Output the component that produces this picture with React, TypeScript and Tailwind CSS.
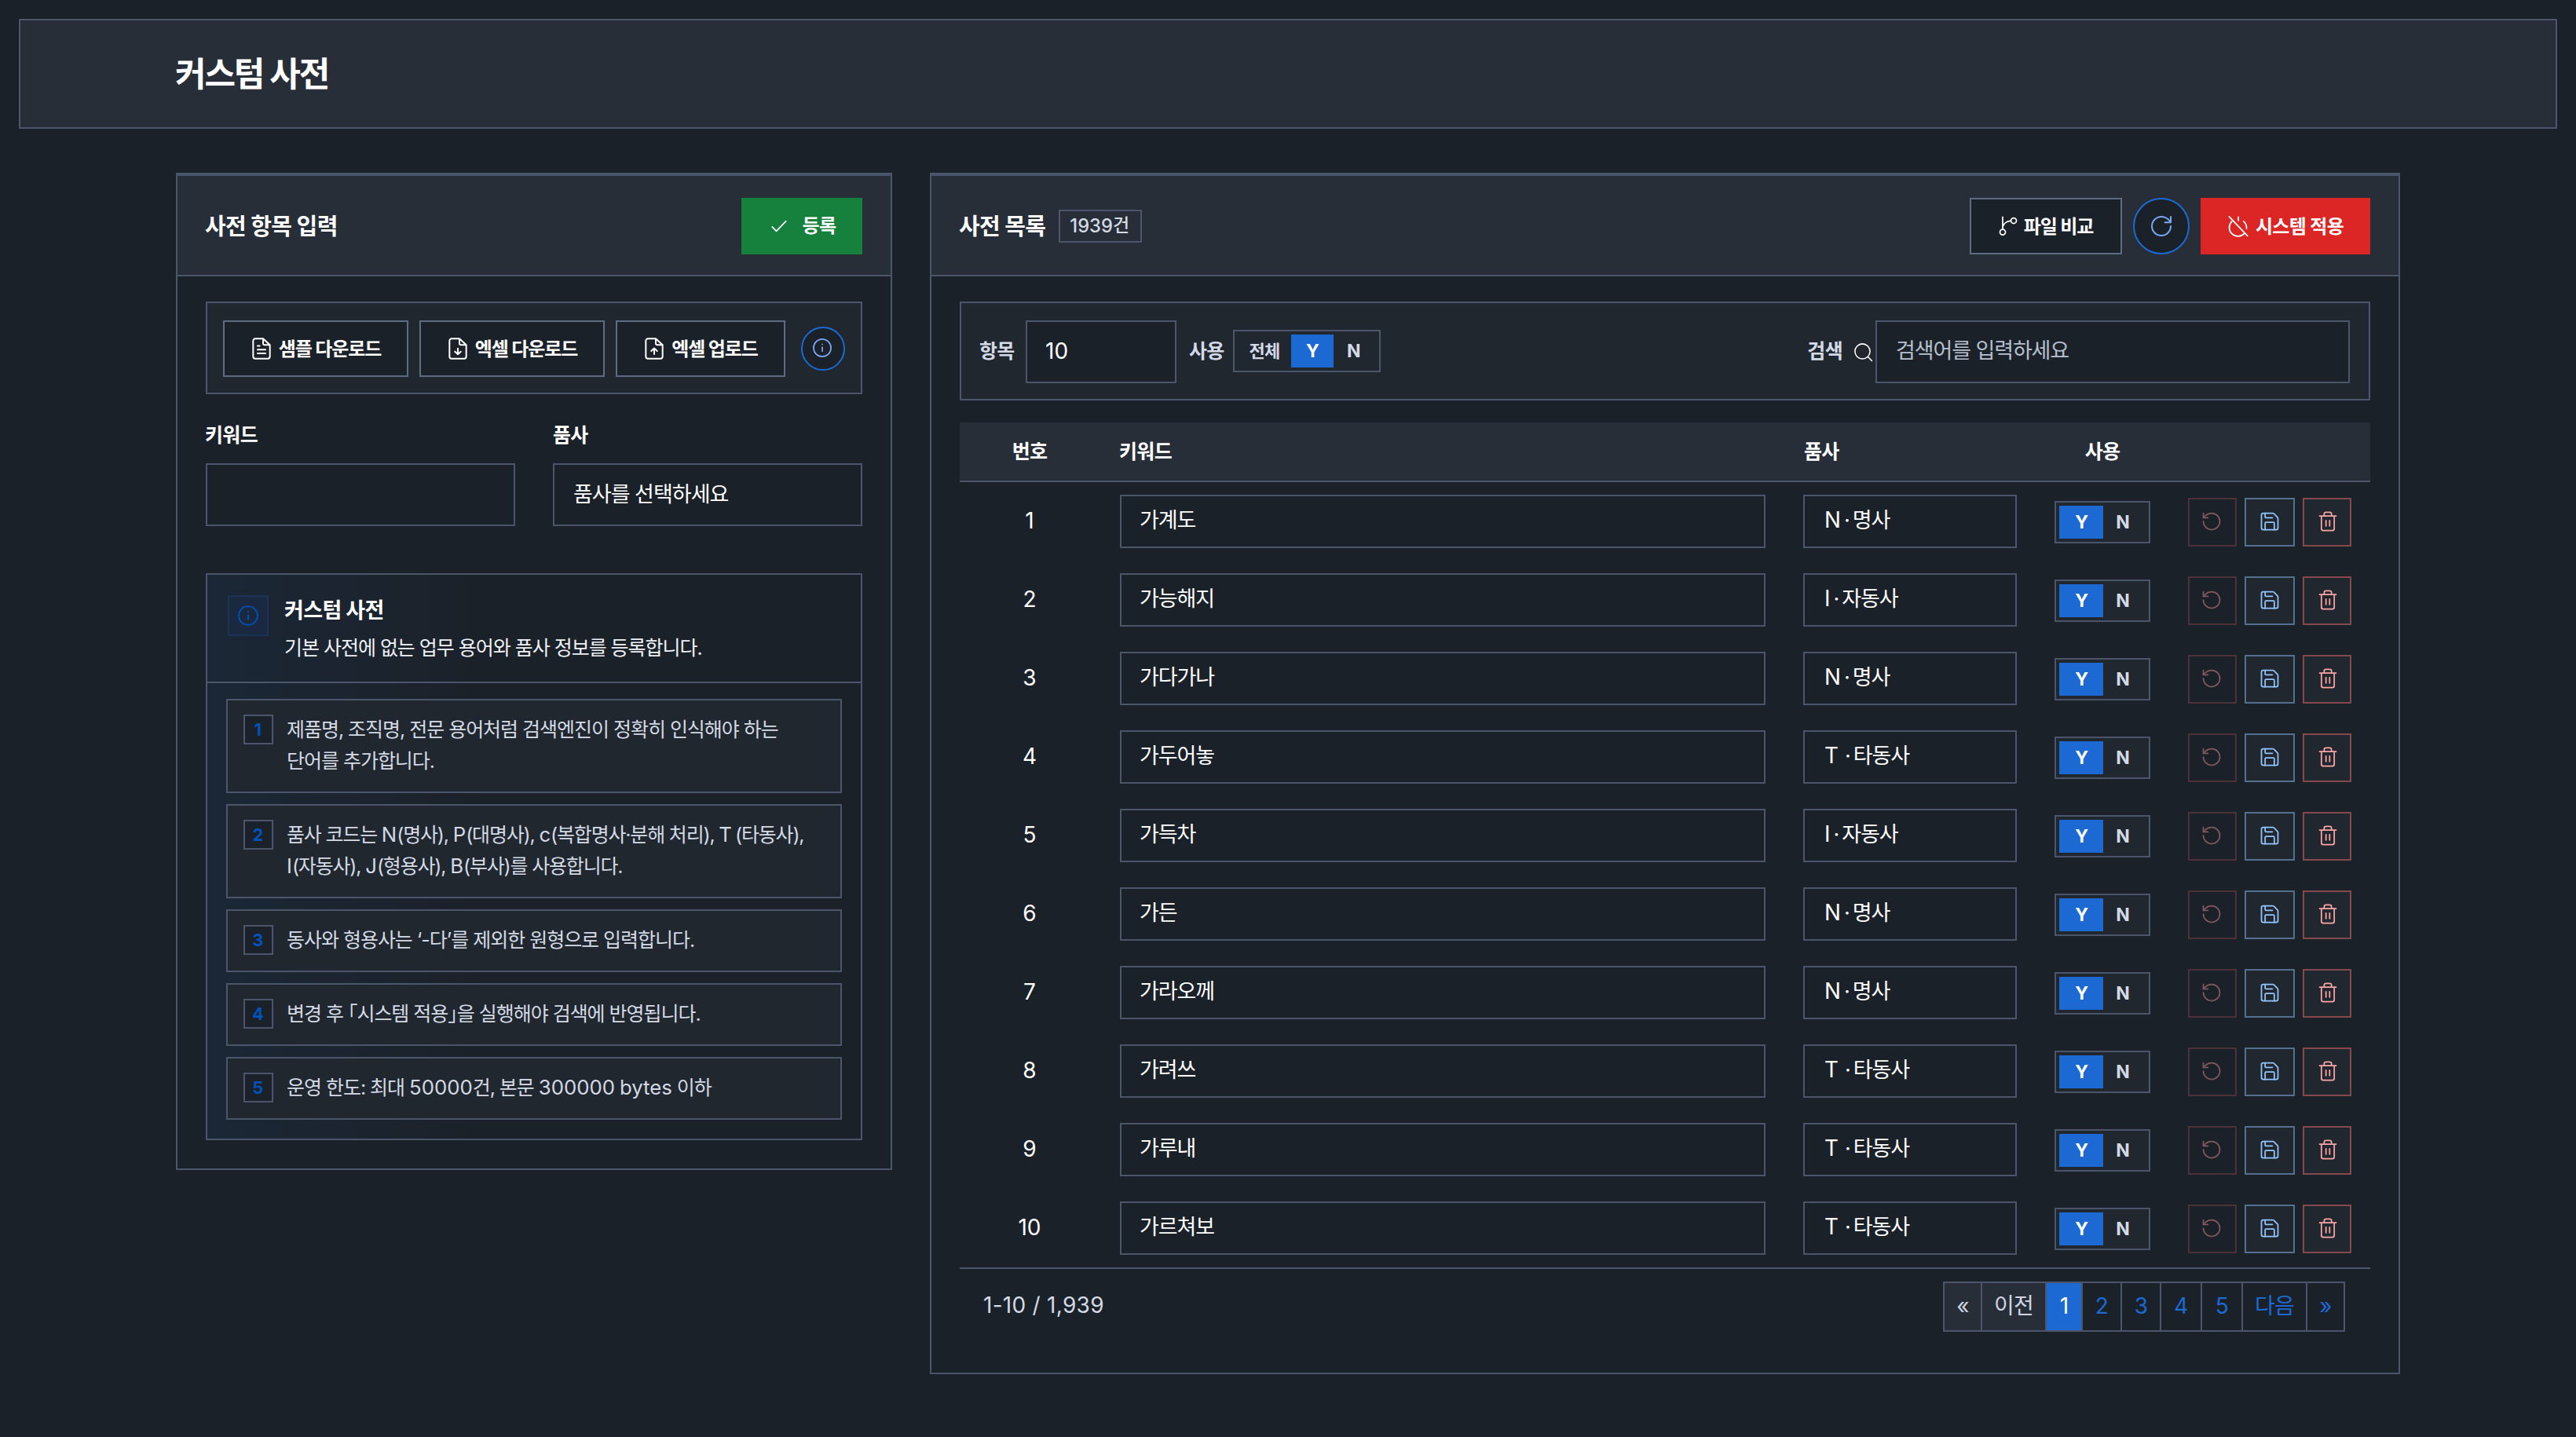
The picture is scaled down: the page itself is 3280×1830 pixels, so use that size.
import { Fragment, ReactNode } from "react";

const words = ["가계도", "가능해지", "가다가나", "가두어놓", "가득차", "가든", "가라오께", "가려쓰", "가루내", "가르쳐보"];
const parts = ["N", "I", "N", "T", "I", "N", "N", "T", "T", "T"];
const partNames: Record<string, string> = { N: "명사", I: "자동사", T: "타동사" };

const guide = [
  "제품명, 조직명, 전문 용어처럼 검색엔진이 정확히 인식해야 하는\n단어를 추가합니다.",
  "품사 코드는 N(명사), P(대명사), c(복합명사·분해 처리), T(타동사),\nI(자동사), J(형용사), B(부사)를 사용합니다.",
  "동사와 형용사는 ‘-다’를 제외한 원형으로 입력합니다.",
  "변경 후 「시스템 적용」을 실행해야 검색에 반영됩니다.",
  "운영 한도: 최대 50000건, 본문 300000 bytes 이하",
];

const pages = [
  { label: "«", cls: "w-[50px] bg-[#272e38] text-[#cfd6e1]" },
  { label: "이전", cls: "w-[84px] bg-[#272e38] text-[#cfd6e1]" },
  { label: "1", cls: "z-10 w-[48px] border-[#1c69d4] bg-[#1c69d4] text-white" },
  { label: "2", cls: "w-[52px] text-[#1c69d4]" },
  { label: "3", cls: "w-[52px] text-[#1c69d4]" },
  { label: "4", cls: "w-[54px] text-[#1c69d4]" },
  { label: "5", cls: "w-[54px] text-[#1c69d4]" },
  { label: "다음", cls: "w-[84px] text-[#1c69d4]" },
  { label: "»", cls: "w-[50px] text-[#1c69d4]" },
];

const sheet = <path d="M13.5 2.5H6a2 2 0 0 0-2 2v15a2 2 0 0 0 2 2h12a2 2 0 0 0 2-2V8.5L13.500 2.500V7A1.500 1.500 0 0 0 15 8.500h5" />;

const paths: Record<string, ReactNode> = {
  check: <path d="M4.5 12.8 9 17.5 19.5 6.5" />,
  file: (
    <>
      {sheet}
      <path d="M8.2 9.300h2M8.200 12.900h7.600M8.200 16.500h7.600" />
    </>
  ),
  down: (
    <>
      {sheet}
      <path d="M12 11.8v5.600M9.200 14.800 12 17.500l2.800-2.700" />
    </>
  ),
  up: (
    <>
      {sheet}
      <path d="M12 17.300v-5.600M9.200 14.300 12 11.600l2.800 2.700" />
    </>
  ),
  info: (
    <>
      <circle cx="12" cy="12" r="9.5" />
      <path d="M12 11.300v4.400M12 8v.1" />
    </>
  ),
  branch: (
    <>
      <path d="M6 2v13M15 6.2C10 6.600 6 9.500 6 15" />
      <circle cx="18" cy="6" r="3" />
      <circle cx="6" cy="18.500" r="3" />
    </>
  ),
  refresh: (
    <>
      <path d="M21 12a9 9 0 1 1-9-9c2.500 0 4.900 1 6.700 2.700L21 8" />
      <path d="M21 3v5.500h-5.500" />
    </>
  ),
  power: <path d="M2 1.600 22 22.600M12 2v3.800M17.800 6.700a9.500 9.500 0 0 1 3.200 8M4.900 7A9.300 9.300 0 1 0 18.300 20.200" />,
  search: (
    <>
      <circle cx="11" cy="11" r="9.2" />
      <path d="M17.8 17.800l4.700 4.700" />
    </>
  ),
  undo: (
    <>
      <path d="M3 12a9 9 0 1 0 9-9 9.750 9.750 0 0 0-6.740 2.740L3 8" />
      <path d="M3 3v5h5" />
    </>
  ),
  save: (
    <>
      <path d="M15.200 3a2 2 0 0 1 1.400.6l3.800 3.800a2 2 0 0 1 .6 1.400V19a2 2 0 0 1-2 2H5a2 2 0 0 1-2-2V5a2 2 0 0 1 2-2z" />
      <path d="M17 21v-7a1 1 0 0 0-1-1H8a1 1 0 0 0-1 1v7M7 3v4a1 1 0 0 0 1 1h7" />
    </>
  ),
  trash: <path d="M3 6h18M19 6v14a2 2 0 0 1-2 2H7a2 2 0 0 1-2-2V6M8 6V4a2 2 0 0 1 2-2h4a2 2 0 0 1 2 2v2M10 11v6M14 11v6" />,
};

function Icon({ name, className }: { name: string; className: string }) {
  return (
    <svg viewBox="0 0 24 24" fill="none" stroke="currentColor" strokeWidth={1.5} strokeLinecap="round" strokeLinejoin="round" className={`shrink-0 ${className}`}>
      {paths[name]}
    </svg>
  );
}

// Hangul is set a little tighter than the latin runs around it.
function Txt({ children }: { children: string }) {
  return (
    <>
      {children.split(/([A-Za-z0-9]+)/).map((run, i) => (
        <Fragment key={i}>
          {i % 2 ? <span className={`text-[1.03em] tracking-normal ${run === "T" ? "mr-1" : ""}`}>{run}</span> : run}
        </Fragment>
      ))}
    </>
  );
}

function ToolButton({ icon, iconSize, label, className }: { icon: string; iconSize: string; label: string; className: string }) {
  return (
    <button className={`flex h-[72px] items-center justify-center gap-1.5 border-2 border-[#5f6b80] bg-[#1b2129] pr-0.5 text-[24px] font-bold tracking-[-0.045em] ${className}`}>
      <Icon name={icon} className={iconSize} />
      <span className="pt-0.5">{label}</span>
    </button>
  );
}

function Row({ index }: { index: number }) {
  const part = parts[index];
  return (
    <div className="grid h-[100px] grid-cols-[180px_870px_320px_170px_256px] items-center text-[27px] tracking-[-0.04em]">
      <div className="pr-0.5 pb-0.5 text-center text-[28px] tracking-normal">{index + 1}</div>
      <div className="px-6">
        <div className="flex h-[68px] items-center border-2 border-[#4b566b] px-[23px] pb-0.5">{words[index]}</div>
      </div>
      <div className="px-6">
        <div className="flex h-[68px] items-center border-2 border-[#4b566b] px-[25px] pb-0.5">
          <Txt>{part}</Txt>
          <span className="mx-1">·</span>
          {partNames[part]}
        </div>
      </div>
      <div className="px-6 pt-0.5">
        <div className="flex h-[54px] border-2 border-[#4b566b] bg-[#21272f] p-1 text-[23px] font-bold">
          <span className="flex w-14 items-center justify-center bg-[#1c69d4]">Y</span>
          <span className="flex flex-1 items-center justify-center pr-[5px] text-[#d3dae5]">N</span>
        </div>
      </div>
      <div className="flex gap-2.5 px-6 pt-0.5">
        <button className="flex h-[62px] w-[62px] items-center justify-center border-2 border-[#4c3138] pr-0.5 pb-0.5 text-[#80575e]">
          <Icon name="undo" className="size-7" />
        </button>
        <button className="flex h-[62px] w-[64px] items-center justify-center border-2 border-[#53718f] bg-[#21272f] pb-0.5 text-[#93c5fd]">
          <Icon name="save" className="size-7" />
        </button>
        <button className="flex h-[62px] w-[62px] items-center justify-center border-2 border-[#87484d] bg-[#21272f] pb-0.5 pl-px text-[#fca5a5]">
          <Icon name="trash" className="size-7" />
        </button>
      </div>
    </div>
  );
}

export default function App() {
  return (
    <div className="h-[1830px] w-[3280px] bg-[#1b2129] p-6 font-['Inter','Noto_Sans_CJK_KR',sans-serif] tracking-[-0.04em] text-white">
      <header className="flex h-[140px] items-center border-2 border-[#4b566b] bg-[#272e38] pt-px pl-[197px]">
        <h1 className="text-[43px] font-bold tracking-[-0.05em]">커스텀 사전</h1>
      </header>

      <div className="mt-14 flex items-start gap-12 px-[200px]">
        <section className="w-[912px] border-2 border-t-4 border-[#4b566b]">
          <div className="flex h-[128px] items-center justify-between border-b-2 border-[#4b566b] bg-[#272e38] px-9 pt-0.5">
            <h2 className="-ml-px pt-px text-[29px] font-bold">사전 항목 입력</h2>
            <button className="flex h-[72px] w-[154px] items-center justify-center gap-4 bg-[#16803d] text-[24px] font-bold">
              <Icon name="check" className="size-7" />
              등록
            </button>
          </div>

          <div className="px-9 pt-8 pb-9">
            <div className="flex h-[118px] items-center justify-between border-2 border-[#4b566b] bg-[#21272f] px-5 pt-0.5">
              <div className="flex gap-3.5">
                <ToolButton icon="file" iconSize="size-8" label="샘플 다운로드" className="w-[236px]" />
                <ToolButton icon="down" iconSize="size-8" label="엑셀 다운로드" className="w-[236px]" />
                <ToolButton icon="up" iconSize="size-8" label="엑셀 업로드" className="w-[216px]" />
              </div>
              <button className="flex size-14 items-center justify-center rounded-full border-2 border-[#1c69d4] bg-[#1b2129] pr-0.5 pb-0.5 text-[#7aa7f2]">
                <Icon name="info" className="size-7" />
              </button>
            </div>

            <div className="mt-8 grid grid-cols-2 gap-12">
              <div>
                <div className="-ml-px mb-4 h-10 text-[25px] leading-10 font-bold">키워드</div>
                <div className="h-20 border-2 border-[#4b566b]" />
              </div>
              <div>
                <div className="mb-4 h-10 text-[25px] leading-10 font-bold">품사</div>
                <div className="flex h-20 items-center border-2 border-[#4b566b] px-6 text-[27px] tracking-[-0.037em]">품사를 선택하세요</div>
              </div>
            </div>

            <div className="mt-[60px] border-2 border-[#4b566b] bg-[linear-gradient(90deg,#1b2736_0%,#1b2129_42%)]">
              <div className="flex h-[138px] gap-5 border-b-2 border-[#4b566b] pt-[26px] pl-[26px]">
                <div className="flex size-[52px] items-center justify-center border-2 border-[#1b3357] bg-[#1a2940] text-[#0052b8]">
                  <Icon name="info" className="size-[30px]" />
                </div>
                <div className="pt-0.5">
                  <div className="text-[27px] leading-9 font-bold">커스텀 사전</div>
                  <div className="mt-[9px] text-[25px] leading-10 tracking-[-0.041em] text-[#eef1f5]">기본 사전에 없는 업무 용어와 품사 정보를 등록합니다.</div>
                </div>
              </div>
              <div className="flex flex-col gap-3.5 px-6 pt-5 pb-6">
                {guide.map((text, i) => (
                  <div key={text} className="flex gap-[17px] border-2 border-[#4b566b] bg-[#21272f] px-5 pt-[17px] pb-[19px]">
                    <span className="mt-px flex size-[38px] shrink-0 items-center justify-center border-2 border-[#4b566b] bg-[#1b2129] pr-0.5 text-[22px] font-bold text-[#0052b8]">{i + 1}</span>
                    <p className={`text-[25px] leading-10 whitespace-pre text-[#d3dae5] [font-feature-settings:'halt'] ${i === 1 ? "tracking-[-0.047em]" : "tracking-[-0.041em]"}`}>
                      <Txt>{text}</Txt>
                    </p>
                  </div>
                ))}
              </div>
            </div>
          </div>
        </section>

        <section className="h-[1530px] w-[1872px] border-2 border-t-4 border-[#4b566b]">
          <div className="flex h-[128px] items-center border-b-2 border-[#4b566b] bg-[#272e38] px-9 pt-0.5">
            <h2 className="-ml-px pt-px text-[29px] font-bold">사전 목록</h2>
            <span className="ml-[17px] flex h-[42px] w-[106px] items-center justify-center border-2 border-[#4b566b] pr-[3px] pb-px text-[23px] font-medium text-[#d3dae5]">
              <Txt>1939건</Txt>
            </span>
            <div className="ml-auto flex gap-3.5">
              <ToolButton icon="branch" iconSize="size-7" label="파일 비교" className="w-[194px]" />
              <button className="flex size-[72px] items-center justify-center rounded-full border-2 border-[#1c69d4] bg-[#1b2129] text-[#7aa7f2]">
                <Icon name="refresh" className="size-[32px]" />
              </button>
              <button className="flex h-[72px] w-[216px] items-center justify-center gap-2 bg-[#dc2626] text-[24px] font-bold">
                <Icon name="power" className="size-7" />
                <span className="pt-0.5">시스템 적용</span>
              </button>
            </div>
          </div>

          <div className="px-9 pt-8">
            <div className="flex h-[126px] items-center border-2 border-[#4b566b] bg-[#21272f] px-6 pt-0.5 text-[25px] font-semibold text-[#d3dae5]">
              <span className="-ml-px w-[59px]">항목</span>
              <div className="flex h-20 w-[192px] items-center border-2 border-[#4b566b] bg-[#1b2129] px-[23px] pb-0.5 text-[28px] font-normal tracking-normal text-white">10</div>
              <span className="ml-4 w-14">사용</span>
              <div className="mb-0.5 flex h-[54px] w-[188px] border-2 border-[#4b566b] p-1 text-[22px]">
                <span className="flex w-[68px] items-center justify-center">전체</span>
                <span className="flex w-[54px] items-center justify-center bg-[#1c69d4] text-[23px] font-bold text-white">Y</span>
                <span className="flex flex-1 items-center justify-center pr-[3px] text-[23px] font-bold">N</span>
              </div>
              <span className="ml-auto">검색</span>
              <Icon name="search" className="mr-[3px] ml-3.5 size-[25px] text-white" />
              <div className="flex h-20 w-[604px] items-center border-2 border-[#4b566b] bg-[#1b2129] px-6 pb-px text-[27px] font-normal tracking-[-0.041em] text-[#b7c0cd]">검색어를 입력하세요</div>
            </div>

            <div className="mt-7 grid h-[76px] grid-cols-[180px_870px_320px_170px_256px] items-center border-b-2 border-[#4b566b] bg-[#272e38] pt-0.5 text-[25px] font-bold">
              <div className="pr-0.5 text-center">번호</div>
              <div className="px-[23px]">키워드</div>
              <div className="px-[25px]">품사</div>
              <div className="text-center">사용</div>
            </div>
            {words.map((word, i) => (
              <Row key={word} index={i} />
            ))}
            <div className="flex items-start justify-between border-t-2 border-[#4b566b] px-8 pt-4">
              <span className="-ml-0.5 text-[28px] leading-[60px] tracking-[0.01em] text-[#d3dae5]">1-10 / 1,939</span>
              <div className="flex pl-0.5 text-[28px]">
                {pages.map((page) => (
                  <span key={page.label} className={`-ml-0.5 flex h-16 items-center justify-center border-2 border-[#4b566b] pb-[3px] ${page.cls}`}>
                    {page.label}
                  </span>
                ))}
              </div>
            </div>
          </div>
        </section>
      </div>
    </div>
  );
}
